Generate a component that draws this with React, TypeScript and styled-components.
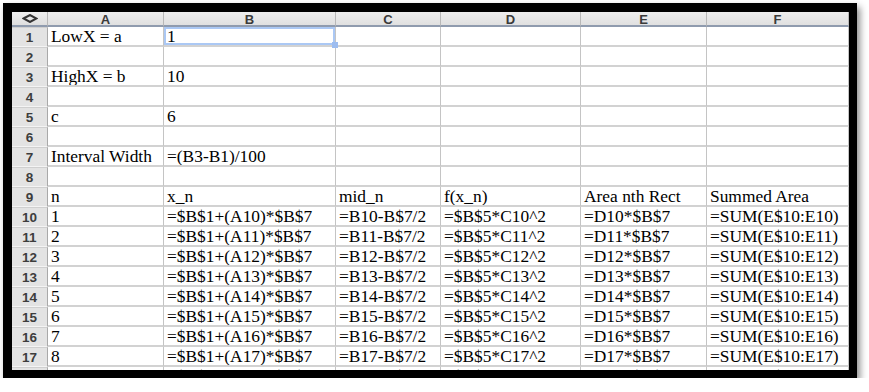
import React from 'react';
import styled, { createGlobalStyle } from 'styled-components';

const GlobalStyle = createGlobalStyle`
  html, body {
    margin: 0;
    padding: 0;
    background: #fff;
  }
`;

const columns = ['A', 'B', 'C', 'D', 'E', 'F'];
const widths = [36, 116, 172, 105, 140, 126, 142];

const buildRows = (): string[][] => {
  const rows: string[][] = [
    ['LowX = a', '1'],
    [],
    ['HighX = b', '10'],
    [],
    ['c', '6'],
    [],
    ['Interval Width', '=(B3-B1)/100'],
    [],
    ['n', 'x_n', 'mid_n', 'f(x_n)', 'Area nth Rect', 'Summed Area'],
  ];
  for (let i = 10; i <= 18; i++) {
    rows.push([
      String(i - 9),
      `=$B$1+(A${i})*$B$7`,
      `=B${i}-B$7/2`,
      `=$B$5*C${i}^2`,
      `=D${i}*$B$7`,
      `=SUM(E$10:E${i})`,
    ]);
  }
  return rows;
};

const App: React.FC = () => {
  const rows = buildRows();

  return (
    <>
      <GlobalStyle />
      <Frame>
        <Sheet>
          <Corner>
            <svg width="16" height="9" viewBox="0 0 16 9">
              <polygon points="1.5,4.5 8,1 14.5,4.5 8,8" fill="none" stroke="#333" strokeWidth="2" />
            </svg>
          </Corner>
          {columns.map((c) => (
            <ColHeader key={c}>{c}</ColHeader>
          ))}
          {rows.map((row, r) => (
            <React.Fragment key={r}>
              <RowHeader>{r + 1}</RowHeader>
              {columns.map((c, ci) => (
                <Cell key={c} $selected={r === 0 && ci === 1}>
                  {row[ci] ?? ''}
                  {r === 0 && ci === 1 && <Handle />}
                </Cell>
              ))}
            </React.Fragment>
          ))}
        </Sheet>
      </Frame>
    </>
  );
};

const Frame = styled.div`
  margin: 3px 0 0 3px;
  width: 837px;
  height: 358px;
  border: 9px solid #000;
  border-right-width: 8px;
  border-bottom-width: 8px;
  overflow: hidden;
  background: #fff;
  box-shadow: 3px 4px 7px rgba(0, 0, 0, 0.45);
`;

const Sheet = styled.div`
  display: grid;
  grid-template-columns: ${widths.map((w) => `${w}px`).join(' ')};
  grid-template-rows: 15px;
  grid-auto-rows: 20px;
`;

const Corner = styled.div`
  box-sizing: border-box;
  display: flex;
  align-items: center;
  justify-content: center;
  background: linear-gradient(#efefef, #dedede);
  border-right: 1px solid #b8b8b8;
  border-bottom: 2px solid #8f9bae;
`;

const ColHeader = styled.div`
  box-sizing: border-box;
  display: flex;
  align-items: center;
  justify-content: center;
  padding-top: 1px;
  background: linear-gradient(#eeeeee, #e0e0e0);
  border-right: 1px solid #b8b8b8;
  border-bottom: 2px solid #8f9bae;
  font-family: 'Liberation Sans', 'DejaVu Sans', sans-serif;
  font-weight: 700;
  font-size: 13px;
  color: #3a3a3a;
`;

const RowHeader = styled.div`
  box-sizing: border-box;
  display: flex;
  align-items: center;
  justify-content: center;
  background: #e3e3e3;
  border-right: 1px solid #a9a9a9;
  border-bottom: 1px solid #f4f4f4;
  border-top: 1px solid #cfcfcf;
  font-family: 'Liberation Sans', 'DejaVu Sans', sans-serif;
  font-weight: 700;
  font-size: 13.5px;
  color: #3d3d3d;
`;

const Cell = styled.div<{ $selected?: boolean }>`
  position: relative;
  box-sizing: border-box;
  display: flex;
  align-items: center;
  padding: 1px 0 0 3px;
  background: #fff;
  border-right: 1px solid #c4c4c4;
  border-bottom: 2px solid #d2d2d2;
  font-family: 'Liberation Serif', 'Times New Roman', serif;
  font-size: 17.4px;
  color: #000;
  white-space: nowrap;
  overflow: hidden;
  ${({ $selected }) =>
    $selected &&
    `
    overflow: visible;
    box-shadow: inset 0 0 0 2px #abc8f4;
  `}
`;

const Handle = styled.span`
  position: absolute;
  right: -3px;
  bottom: -3px;
  width: 6px;
  height: 6px;
  background: #9dbdf0;
  z-index: 1;
`;

export default App;
